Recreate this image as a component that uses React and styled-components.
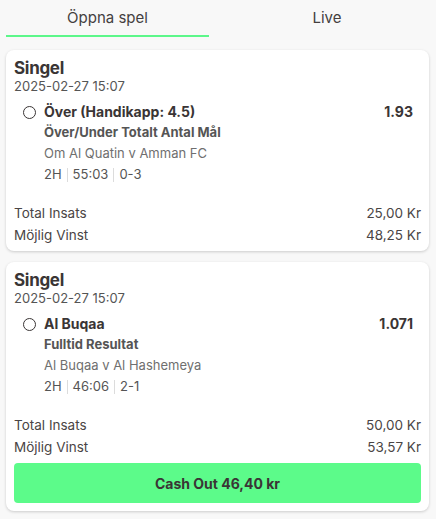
import React from 'react';
import styled, { createGlobalStyle } from 'styled-components';

const GlobalStyle = createGlobalStyle`
  html, body {
    margin: 0;
    padding: 0;
    background: #f8f8f8;
    font-family: Inter, "Noto Sans", sans-serif;
    color: #3a3535;
  }
`;

const Page = styled.div`
  width: 436px;
  min-height: 519px;
  background: #f8f8f8;
`;

const Tabs = styled.nav`
  display: grid;
  grid-template-columns: 203px 1fr;
  column-gap: 9px;
  padding-left: 6px;
`;

const Tab = styled.div`
  height: 35px;
  display: flex;
  align-items: center;
  justify-content: center;
  font-size: 15px;
  color: #443f3f;
  border-bottom: 2px solid ${(p) => (p.$active ? '#5cf78a' : 'transparent')};
`;

const List = styled.div`
  display: flex;
  flex-direction: column;
  gap: 11px;
  padding: 13px 7px 0 6px;
`;

const Card = styled.section`
  background: #fff;
  border-radius: 8px;
  box-shadow: 0 1px 3px rgba(0, 0, 0, 0.18);
  padding: 8px 8px ${(p) => (p.$withButton ? '8px' : '5px')} 8px;
`;

const Title = styled.div`
  font-size: 17px;
  font-weight: 700;
  line-height: 20px;
  letter-spacing: -0.3px;
  color: #3a3535;
`;

const Date = styled.div`
  font-size: 13px;
  line-height: 16px;
  color: #555;
`;

const Selection = styled.div`
  margin-top: 8px;
  padding-left: 9px;
  display: grid;
  grid-template-columns: 13px 1fr auto;
  column-gap: 8px;
  align-items: center;
`;

const Radio = styled.span`
  box-sizing: border-box;
  width: 13px;
  height: 13px;
  border: 1.4px solid #3a3535;
  border-radius: 50%;
`;

const Pick = styled.div`
  font-size: 14px;
  font-weight: 700;
  line-height: 20px;
  color: #3a3535;
`;

const Odds = styled.div`
  font-size: 14px;
  font-weight: 700;
  line-height: 20px;
  color: #3a3535;
  padding-right: 8px;
`;

const Details = styled.div`
  padding-left: 30px;
`;

const Market = styled.div`
  font-size: 13px;
  font-weight: 700;
  line-height: 21px;
  color: #555;
`;

const Event = styled.div`
  font-size: 13px;
  line-height: 21px;
  color: #6f6f6f;
`;

const Clock = styled.div`
  display: flex;
  align-items: center;
  font-size: 13px;
  line-height: 21px;
  color: #555;
`;

const Sep = styled.span`
  width: 1px;
  height: 14px;
  background: #dcdcdc;
  margin: 0 5px;
`;

const Totals = styled.div`
  margin-top: 17px;
`;

const TotalRow = styled.div`
  display: flex;
  justify-content: space-between;
  font-size: 13.5px;
  line-height: 22px;
  color: #4a4545;
`;

const CashOut = styled.button`
  display: block;
  width: 100%;
  height: 40px;
  margin-top: 5px;
  border: none;
  border-radius: 4px;
  background: #5cfb8a;
  font-family: inherit;
  font-size: 14px;
  font-weight: 700;
  color: #3a3535;
`;

const bets = [
  {
    pick: 'Över (Handikapp: 4.5)',
    odds: '1.93',
    market: 'Över/Under Totalt Antal Mål',
    event: 'Om Al Quatin v Amman FC',
    clock: ['2H', '55:03', '0-3'],
    stake: '25,00 Kr',
    win: '48,25 Kr',
  },
  {
    pick: 'Al Buqaa',
    odds: '1.071',
    market: 'Fulltid Resultat',
    event: 'Al Buqaa v Al Hashemeya',
    clock: ['2H', '46:06', '2-1'],
    stake: '50,00 Kr',
    win: '53,57 Kr',
    cashOut: 'Cash Out 46,40 kr',
  },
];

function BetCard({ bet }) {
  return (
    <Card $withButton={!!bet.cashOut}>
      <Title>Singel</Title>
      <Date>2025-02-27 15:07</Date>
      <Selection>
        <Radio />
        <Pick>{bet.pick}</Pick>
        <Odds>{bet.odds}</Odds>
      </Selection>
      <Details>
        <Market>{bet.market}</Market>
        <Event>{bet.event}</Event>
        <Clock>
          {bet.clock[0]}
          <Sep />
          {bet.clock[1]}
          <Sep />
          {bet.clock[2]}
        </Clock>
      </Details>
      <Totals>
        <TotalRow>
          <span>Total Insats</span>
          <span>{bet.stake}</span>
        </TotalRow>
        <TotalRow>
          <span>Möjlig Vinst</span>
          <span>{bet.win}</span>
        </TotalRow>
      </Totals>
      {bet.cashOut && <CashOut>{bet.cashOut}</CashOut>}
    </Card>
  );
}

export default function App() {
  return (
    <Page>
      <GlobalStyle />
      <Tabs>
        <Tab $active>Öppna spel</Tab>
        <Tab>Live</Tab>
      </Tabs>
      <List>
        {bets.map((b) => (
          <BetCard key={b.pick} bet={b} />
        ))}
      </List>
    </Page>
  );
}
